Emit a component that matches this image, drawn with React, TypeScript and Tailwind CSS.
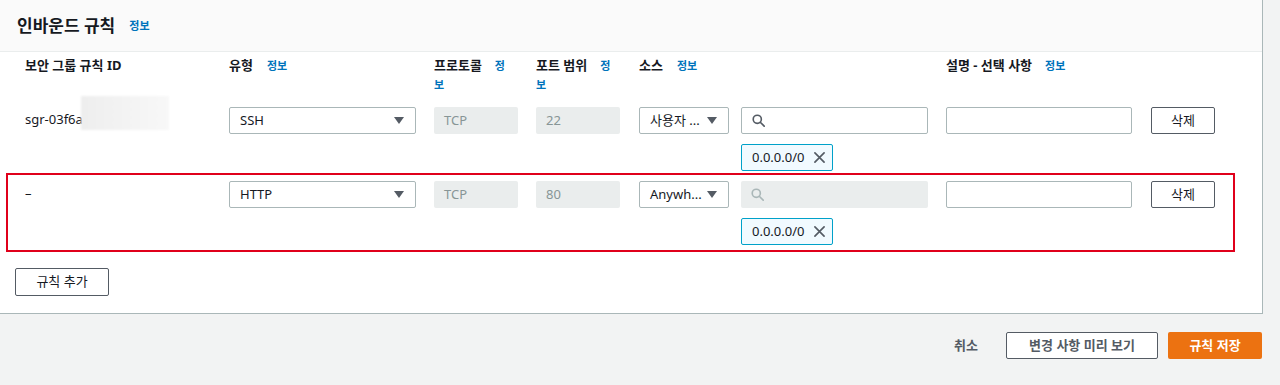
import React from "react";

const font = "font-['Noto_Sans','Noto_Sans_CJK_KR',sans-serif]";

function Caret() {
  return (
    <svg width="10" height="7" viewBox="0 0 10 7" className="shrink-0">
      <path d="M0 0 H10 L5 7 Z" fill="#545b64" />
    </svg>
  );
}

function SearchIcon({ color }: { color: string }) {
  return (
    <svg width="13" height="13" viewBox="0 0 16 16" fill="none" stroke={color} strokeWidth="2">
      <circle cx="6.5" cy="6.5" r="5" />
      <path d="M10.2 10.2 L15 15" strokeLinecap="round" />
    </svg>
  );
}

function Select({ value, width }: { value: string; width: string }) {
  return (
    <div
      className={`${width} h-[27px] flex items-center justify-between pl-[10px] pr-[11px] border border-[#aab7b8] rounded-[2px] bg-white text-[13px] text-[#16191f]`}
    >
      <span className="whitespace-nowrap">{value}</span>
      <Caret />
    </div>
  );
}

function Disabled({ value }: { value: string }) {
  return (
    <div className="w-[84px] h-[27px] flex items-center pl-[10px] rounded-[2px] bg-[#eaeded] text-[13px] text-[#879596]">
      {value}
    </div>
  );
}

function Chip() {
  return (
    <div className="ml-[102px] mt-[10px] w-[92px] h-[27px] flex items-center justify-between pl-[10px] pr-[7px] border border-[#00a1c9] rounded-[2px] bg-[#f1faff] text-[13px] text-[#16191f]">
      <span>0.0.0.0/0</span>
      <svg width="11" height="11" viewBox="0 0 12 12" stroke="#545b64" strokeWidth="1.8" strokeLinecap="round">
        <path d="M1 1 L11 11 M11 1 L1 11" />
      </svg>
    </div>
  );
}

function Info({ className = "" }: { className?: string }) {
  return <span className={`text-[11px] font-bold text-[#0073bb] ${className}`}>정보</span>;
}

const cols = "grid grid-cols-[204px_205px_102px_103px_307px_205px_64px]";

type Rule = {
  id: React.ReactNode;
  type: string;
  port: string;
  source: string;
  searchDisabled: boolean;
};

function RuleRow({ rule }: { rule: Rule }) {
  return (
    <div className={cols}>
      <div className="relative pt-[3px] text-[13px] text-[#16191f] leading-[18px]">{rule.id}</div>
      <div>
        <Select value={rule.type} width="w-[187px]" />
      </div>
      <div>
        <Disabled value="TCP" />
      </div>
      <div>
        <Disabled value={rule.port} />
      </div>
      <div>
        <div className="flex gap-[12px]">
          <Select value={rule.source} width="w-[90px]" />
          <div
            className={`w-[187px] h-[27px] flex items-center pl-[10px] rounded-[2px] ${
              rule.searchDisabled ? "bg-[#eaeded]" : "border border-[#aab7b8] bg-white"
            }`}
          >
            <SearchIcon color={rule.searchDisabled ? "#aab7b8" : "#545b64"} />
          </div>
        </div>
        <Chip />
      </div>
      <div>
        <div className="w-[186px] h-[27px] border border-[#aab7b8] rounded-[2px] bg-white" />
      </div>
      <div>
        <button className="w-[64px] h-[27px] border border-[#545b64] rounded-[2px] bg-white text-[13px] text-[#16191f]">
          삭제
        </button>
      </div>
    </div>
  );
}

export default function App() {
  return (
    <div className={`${font} w-[1280px] h-[385px] bg-[#f2f3f3] overflow-hidden`}>
      <section className="w-[1263px] bg-white border-r border-b border-[#aab7b8]">
        {/* header */}
        <div className="h-[52px] flex items-center pl-[17px] bg-[#fafafa] border-b border-[#eaeded]">
          <h2 className="text-[17px] font-bold text-[#16191f]">인바운드 규칙</h2>
          <Info className="ml-[14px] mt-[1px]" />
        </div>

        {/* column headers */}
        <div className={`${cols} pl-[25px] pt-[4px] text-[13px] font-bold text-[#16191f] leading-[18px]`}>
          <div>보안 그룹 규칙 ID</div>
          <div className="flex items-baseline gap-[14px]">
            유형 <Info />
          </div>
          <div>
            프로토콜
            <span className="ml-[13px] text-[11px] font-bold text-[#0073bb]">
              정<br />보
            </span>
          </div>
          <div>
            포트 범위
            <span className="ml-[13px] text-[11px] font-bold text-[#0073bb]">
              정<br />보
            </span>
          </div>
          <div className="flex items-baseline gap-[14px]">
            소스 <Info />
          </div>
          <div className="flex items-baseline gap-[13px] whitespace-nowrap">
            설명 - 선택 사항 <Info />
          </div>
          <div />
        </div>

        {/* rules */}
        <div className="mt-[13px] pl-[25px]">
          <RuleRow
            rule={{
              id: (
                <>
                  sgr-03f6a
                  <span className="absolute left-[56px] top-[-11px] w-[88px] h-[34px] bg-gradient-to-r from-[#eeeeee] via-[#f3f3f3] to-[#f8f8f8] blur-[1px]" />
                </>
              ),
              type: "SSH",
              port: "22",
              source: "사용자 ...",
              searchDisabled: false,
            }}
          />
        </div>

        <div className="mt-[2px] ml-[6px] w-[1229px] border-2 border-[#e0001b] pl-[17px] pt-[6px] pb-[5px]">
          <RuleRow
            rule={{ id: "–", type: "HTTP", port: "80", source: "Anywh...", searchDisabled: true }}
          />
        </div>

        <div className="pt-[16px] pb-[17px] pl-[15px]">
          <button className="w-[94px] h-[28px] border border-[#545b64] rounded-[2px] bg-white text-[13px] text-[#16191f]">
            규칙 추가
          </button>
        </div>
      </section>

      {/* footer actions */}
      <div className="w-[1262px] flex justify-end items-center pt-[18px]">
        <button className="mr-[28px] text-[13px] font-bold text-[#545b64]">취소</button>
        <button className="w-[152px] h-[27px] mr-[10px] border border-[#545b64] rounded-[2px] bg-white text-[13px] font-bold text-[#545b64]">
          변경 사항 미리 보기
        </button>
        <button className="w-[94px] h-[27px] rounded-[2px] bg-[#ec7211] text-[13px] font-bold text-white">
          규칙 저장
        </button>
      </div>
    </div>
  );
}
